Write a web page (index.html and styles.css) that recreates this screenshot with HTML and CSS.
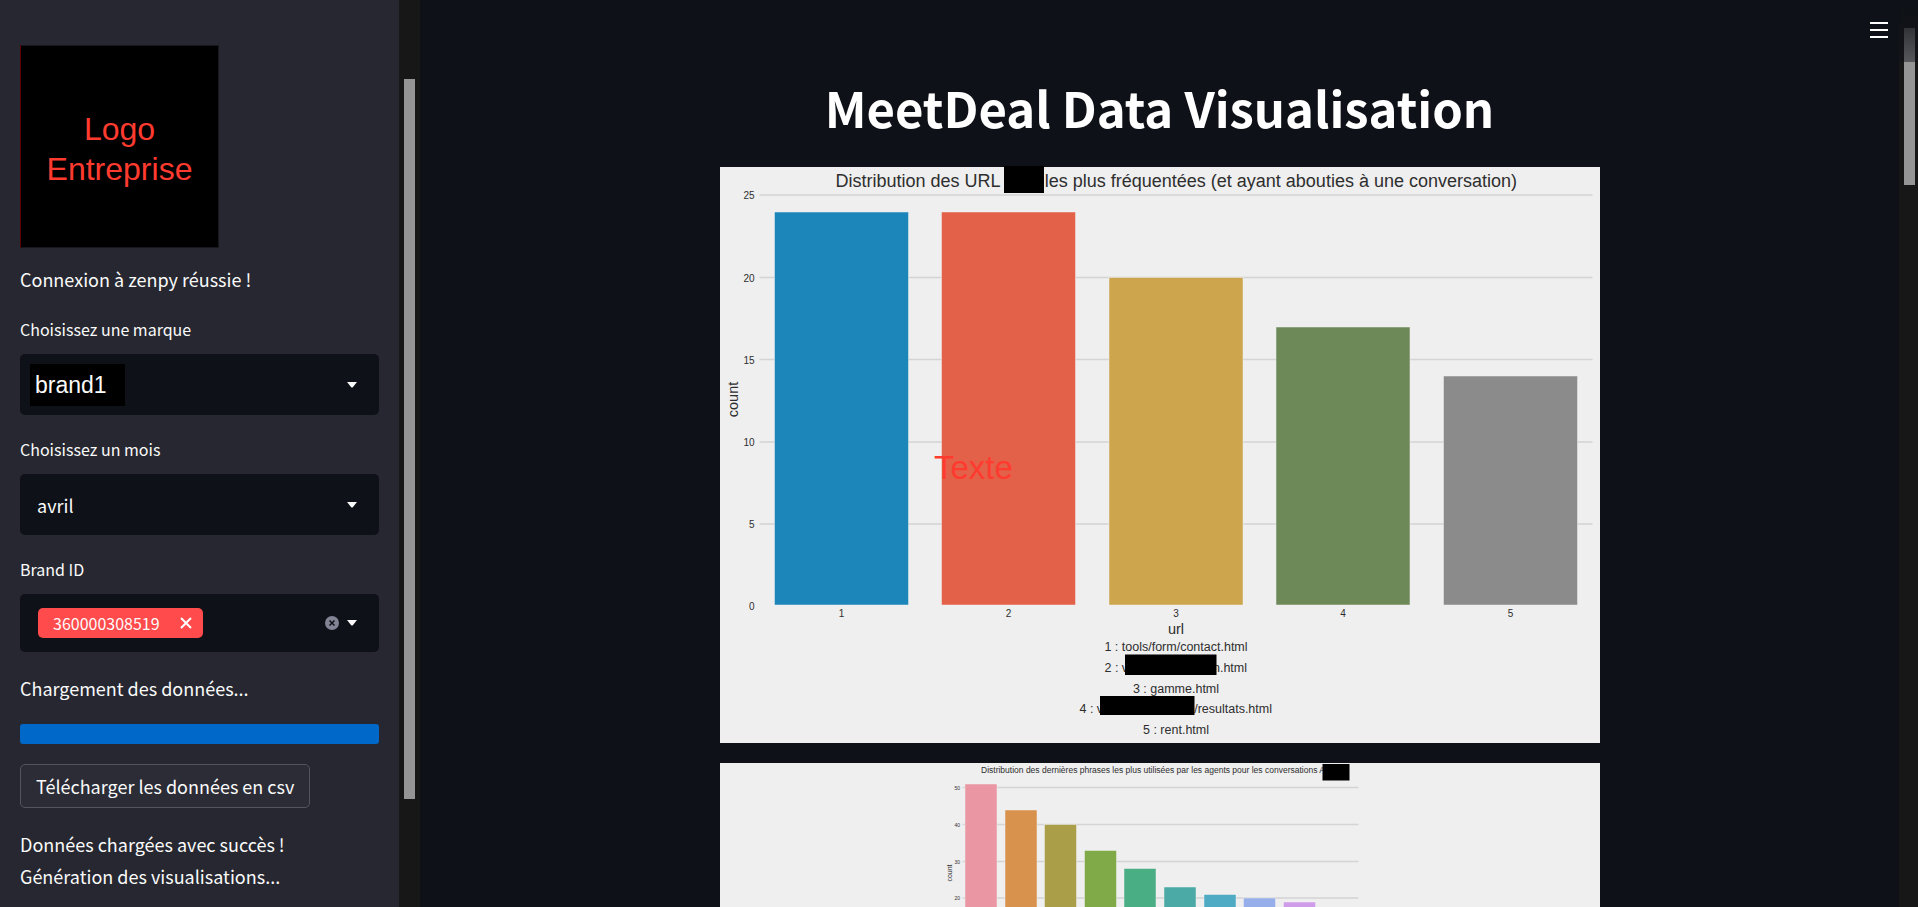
FILE: index.html
```html
<!DOCTYPE html>
<html lang="fr">
<head>
<meta charset="utf-8">
<meta name="viewport" content="width=device-width, initial-scale=1">
<title>MeetDeal Data Visualisation</title>
<link rel="stylesheet" href="styles.css">
</head>
<body>
<div class="app">
  <aside class="sidebar">
    <div class="sidebar-content">
      <div class="logo">Logo<br>Entreprise</div>
      <p class="status">Connexion à zenpy réussie !</p>

      <div class="field">
        <label class="field-label" for="brand">Choisissez une marque</label>
        <div class="select-box">
          <select class="select select-brand" id="brand"><option>brand1</option></select>
          <svg class="caret" viewBox="0 0 10 6" aria-hidden="true"><path d="M0 0h10L6 5Q5 6 4 5z"/></svg>
        </div>
      </div>

      <div class="field">
        <label class="field-label" for="month">Choisissez un mois</label>
        <div class="select-box">
          <select class="select" id="month"><option>avril</option></select>
          <svg class="caret" viewBox="0 0 10 6" aria-hidden="true"><path d="M0 0h10L6 5Q5 6 4 5z"/></svg>
        </div>
      </div>

      <div class="field">
        <label class="field-label" for="brand-id">Brand ID</label>
        <div class="multi">
          <span class="tag">360000308519
            <button class="icon-button" type="button" aria-label="Retirer 360000308519">
              <svg class="tag-cross" viewBox="0 0 12 12" aria-hidden="true"><path d="M1 1l10 10M11 1L1 11"/></svg>
            </button>
          </span>
          <input class="multi-input" id="brand-id" type="text">
          <button class="icon-button" type="button" aria-label="Tout effacer">
            <svg class="clear" viewBox="0 0 14 14" aria-hidden="true"><circle cx="7" cy="7" r="7"/><path d="M4.5 4.5l5 5M9.500 4.500L4.500 9.500"/></svg>
          </button>
          <button class="icon-button" type="button" aria-label="Ouvrir la liste">
            <svg class="caret-inline" viewBox="0 0 10 6" aria-hidden="true"><path d="M0 0h10L6 5Q5 6 4 5z"/></svg>
          </button>
        </div>
      </div>

      <p class="status" id="loading">Chargement des données...</p>
      <progress class="progress" value="100" max="100" aria-labelledby="loading"></progress>
      <button class="download" type="button">Télécharger les données en csv</button>
      <div>
        <p class="status">Données chargées avec succès !</p>
        <p class="status">Génération des visualisations...</p>
      </div>
    </div>
    <div class="scrollbar scrollbar-side"><div class="thumb thumb-side"></div></div>
  </aside>

  <main class="main">
    <div class="page">
      <header class="toolbar">
        <button class="icon-button" type="button" aria-label="Menu">
          <svg class="menu-icon" viewBox="0 0 18 16" aria-hidden="true"><path d="M0 1h18M0 8h18M0 15h18"/></svg>
        </button>
      </header>
      <div class="content">
        <h1 class="title">MeetDeal Data Visualisation</h1>

        <svg class="chart" viewBox="0 0 1760 1152" role="img" aria-label="Distribution des URL les plus fréquentées">
          <rect class="paper" width="1760" height="1152"/>
          <path class="grid" d="M79 56H1745M79 221H1745M79 385H1745M79 550H1745M79 714H1745"/>
          <g class="bars">
            <rect x="109" y="90" width="268" height="786" fill="#1c86ba"/>
            <rect x="443" y="90" width="268" height="786" fill="#e36049"/>
            <rect x="778" y="221" width="268" height="655" fill="#cda54c"/>
            <rect x="1112" y="320" width="268" height="556" fill="#6d8958"/>
            <rect x="1447" y="418" width="268" height="458" fill="#8b8b8b"/>
          </g>
          <g class="text tick end">
            <text x="69" y="64">25</text><text x="69" y="229">20</text><text x="69" y="393">15</text>
            <text x="69" y="557">10</text><text x="69" y="722">5</text><text x="69" y="886">0</text>
          </g>
          <g class="text tick middle">
            <text x="243" y="900">1</text><text x="577" y="900">2</text><text x="912" y="900">3</text>
            <text x="1246" y="900">4</text><text x="1581" y="900">5</text>
          </g>
          <text class="text heading" x="231" y="39">Distribution des URL</text>
          <text class="text heading end" x="1594" y="39">les plus fréquentées (et ayant abouties à une conversation)</text>
          <text class="text axis middle" x="912" y="933">url</text>
          <text class="text axis middle" transform="translate(36 465) rotate(-90)">count</text>
          <g class="text legend middle">
            <text x="912" y="967">1 : tools/form/contact.html</text>
            <text x="912" y="1051">3 : gamme.html</text>
            <text x="912" y="1133">5 : rent.html</text>
          </g>
          <g class="text legend">
            <text x="769" y="1009">2 : v</text>
            <text x="719" y="1092">4 : v</text>
          </g>
          <g class="text legend end">
            <text x="1054" y="1009">n.html</text>
            <text x="1104" y="1092">/resultats.html</text>
          </g>
          <g class="mask">
            <rect x="568" y="-2" width="80" height="54"/>
            <rect x="810" y="975" width="183" height="41"/>
            <rect x="760" y="1058" width="189" height="38"/>
          </g>
          <text class="note" x="428" y="624">Texte</text>
        </svg>

        <svg class="chart" viewBox="0 0 1760 1152" role="img" aria-label="Distribution des dernières phrases les plus utilisées par les agents">
          <rect class="paper" width="1760" height="1152"/>
          <path class="grid" d="M485 49H1277M485 123H1277M485 197H1277M485 270H1277M485 344H1277"/>
          <g class="bars">
            <rect x="490" y="42" width="64" height="376" fill="#ea96a3"/>
            <rect x="570" y="94" width="64" height="324" fill="#d8924e"/>
            <rect x="649" y="123" width="64" height="295" fill="#aa9e48"/>
            <rect x="729" y="175" width="64" height="243" fill="#7faa47"/>
            <rect x="808" y="211" width="64" height="207" fill="#4aae84"/>
            <rect x="888" y="248" width="64" height="170" fill="#4baaa6"/>
            <rect x="968" y="263" width="64" height="155" fill="#4faac4"/>
            <rect x="1047" y="270" width="64" height="148" fill="#96aeea"/>
            <rect x="1127" y="278" width="64" height="140" fill="#cf9cea"/>
          </g>
          <g class="text tick-small end">
            <text x="480" y="53">50</text><text x="480" y="127">40</text><text x="480" y="201">30</text><text x="480" y="274">20</text>
          </g>
          <text class="text heading-small" x="522" y="19">Distribution des dernières phrases les plus utilisées par les agents pour les conversations A</text>
          <text class="text axis-small middle" transform="translate(463 220) rotate(-90)">count</text>
          <rect class="mask" x="1205" y="2" width="54" height="33"/>
        </svg>
      </div>
    </div>
    <div class="scrollbar scrollbar-main"><div class="thumb thumb-main"></div></div>
  </main>
</div>
</body>
</html>
```

FILE: styles.css
```css
* { box-sizing: border-box; }

body {
  margin: 0;
  background: #0e1117;
  color: #fafafa;
  font-family: "Noto Sans CJK SC", "Noto Sans", sans-serif;
  font-size: 18px;
  line-height: 32px;
}

.app {
  display: flex;
  height: 100vh;
  overflow: hidden;
}

/* Sidebar */
.sidebar {
  display: flex;
  flex: 0 0 420px;
  min-width: 0;
  background: #262730;
}

.sidebar-content {
  flex: 1;
  min-width: 0;
  display: flex;
  flex-direction: column;
  gap: 20px;
  padding: 45px 20px 0;
  overflow: hidden;
}

.sidebar-content > * { flex-shrink: 0; }

.logo {
  width: 199px;
  height: 203px;
  margin-bottom: -5px;
  padding-top: 63px;
  border: 1px solid #16171c;
  border-left-color: #5c0000;
  background: #000;
  color: #ff3b30;
  font-family: "Liberation Sans", sans-serif;
  font-size: 32px;
  line-height: 40px;
  text-align: center;
}

.status { margin: 0; }

.field { display: flex; flex-direction: column; }

.field-label {
  height: 39px;
  font-size: 16px;
  line-height: 28px;
}

.select-box { position: relative; }

.select {
  display: block;
  width: 100%;
  height: 61px;
  padding: 0 40px 0 17px;
  border: 0;
  border-radius: 5px;
  appearance: none;
  background: #0e1117;
  color: #fafafa;
  font: inherit;
}

.select-brand {
  padding-left: 15px;
  background: #0e1117 linear-gradient(#000, #000) 10px 10px / 95px 42px no-repeat;
  font-family: "Liberation Sans", sans-serif;
  font-size: 23px;
}

.caret {
  position: absolute;
  top: 28px;
  right: 22px;
  width: 10px;
  height: 6px;
  fill: #fafafa;
  pointer-events: none;
}

.multi {
  display: flex;
  align-items: center;
  gap: 8px;
  height: 58px;
  padding: 0 22px 0 18px;
  border-radius: 5px;
  background: #0e1117;
}

.tag {
  display: flex;
  align-items: center;
  justify-content: space-between;
  flex: none;
  width: 165px;
  height: 30px;
  padding: 0 11px 0 15px;
  border-radius: 5px;
  background: #ff4b4b;
  font-size: 16px;
  line-height: 30px;
}

.icon-button {
  display: flex;
  padding: 0;
  border: 0;
  background: none;
}

.multi-input {
  flex: 1;
  min-width: 0;
  padding: 0;
  border: 0;
  outline: 0;
  background: none;
  color: inherit;
  font: inherit;
}

.tag-cross { width: 12px; height: 12px; fill: none; stroke: #fff; stroke-width: 2; }
.clear { width: 14px; height: 14px; fill: #808495; }
.clear path { stroke: #0e1117; stroke-width: 1.5; }
.caret-inline { width: 10px; height: 6px; fill: #fafafa; }

.progress {
  display: block;
  width: 100%;
  height: 20px;
  border: 0;
  border-radius: 3px;
  overflow: hidden;
  appearance: none;
  background: #0068c9;
}

.progress::-webkit-progress-bar { background: #0e1117; }
.progress::-webkit-progress-value { background: #0068c9; }

.download {
  align-self: flex-start;
  height: 44px;
  padding: 0 15px;
  border: 1px solid #53545c;
  border-radius: 5px;
  background: #2b2c36;
  color: #fafafa;
  font: inherit;
}

/* Scrollbars */
.scrollbar { background: #171717; }
.thumb { width: 11px; margin-left: 5px; background: #959595; }
.scrollbar-side { flex: 0 0 21px; padding-top: 79px; }
.thumb-side { height: 87%; }

.scrollbar-main {
  flex: 0 0 19px;
  padding-top: 28px;
  background: linear-gradient(#0e1117, #131417 62px, #171717 62px);
}

.thumb-main {
  height: 157px;
  background: linear-gradient(#323336, #57585b 34px, #959595 34px);
}

/* Main area */
.main { display: flex; flex: 1; min-width: 0; }
.page { flex: 1; min-width: 0; overflow: hidden; }

.toolbar {
  display: flex;
  align-items: center;
  justify-content: flex-end;
  height: 60px;
  padding-right: 11px;
}

.menu-icon { width: 18px; height: 16px; fill: none; stroke: #fff; stroke-width: 2; }

.content {
  display: flex;
  flex-direction: column;
  gap: 20px;
  max-width: 880px;
  margin: 0 auto;
  padding-top: 14px;
}

.title {
  margin: 0;
  padding-bottom: 7px;
  color: #fff;
  font-size: 49px;
  font-weight: 700;
  line-height: 66px;
  text-align: center;
}

/* Charts */
.chart { display: block; width: 100%; overflow: visible; }
.paper { fill: #efefef; }
.grid { fill: none; stroke: #d4d4d4; stroke-width: 3; }
.bars { stroke: #efefef; stroke-width: 1; }
.text { fill: #2e2e2e; font-family: "Liberation Sans", sans-serif; }
.middle { text-anchor: middle; }
.end { text-anchor: end; }
.tick { font-size: 20px; }
.heading { font-size: 36px; }
.axis { font-size: 29px; }
.legend { font-size: 25px; }
.tick-small { font-size: 10px; }
.heading-small { font-size: 17px; }
.axis-small { font-size: 14px; }
.mask { fill: #000; }
.note { fill: #ff3b30; font-family: "Liberation Sans", sans-serif; font-size: 66px; }
```
